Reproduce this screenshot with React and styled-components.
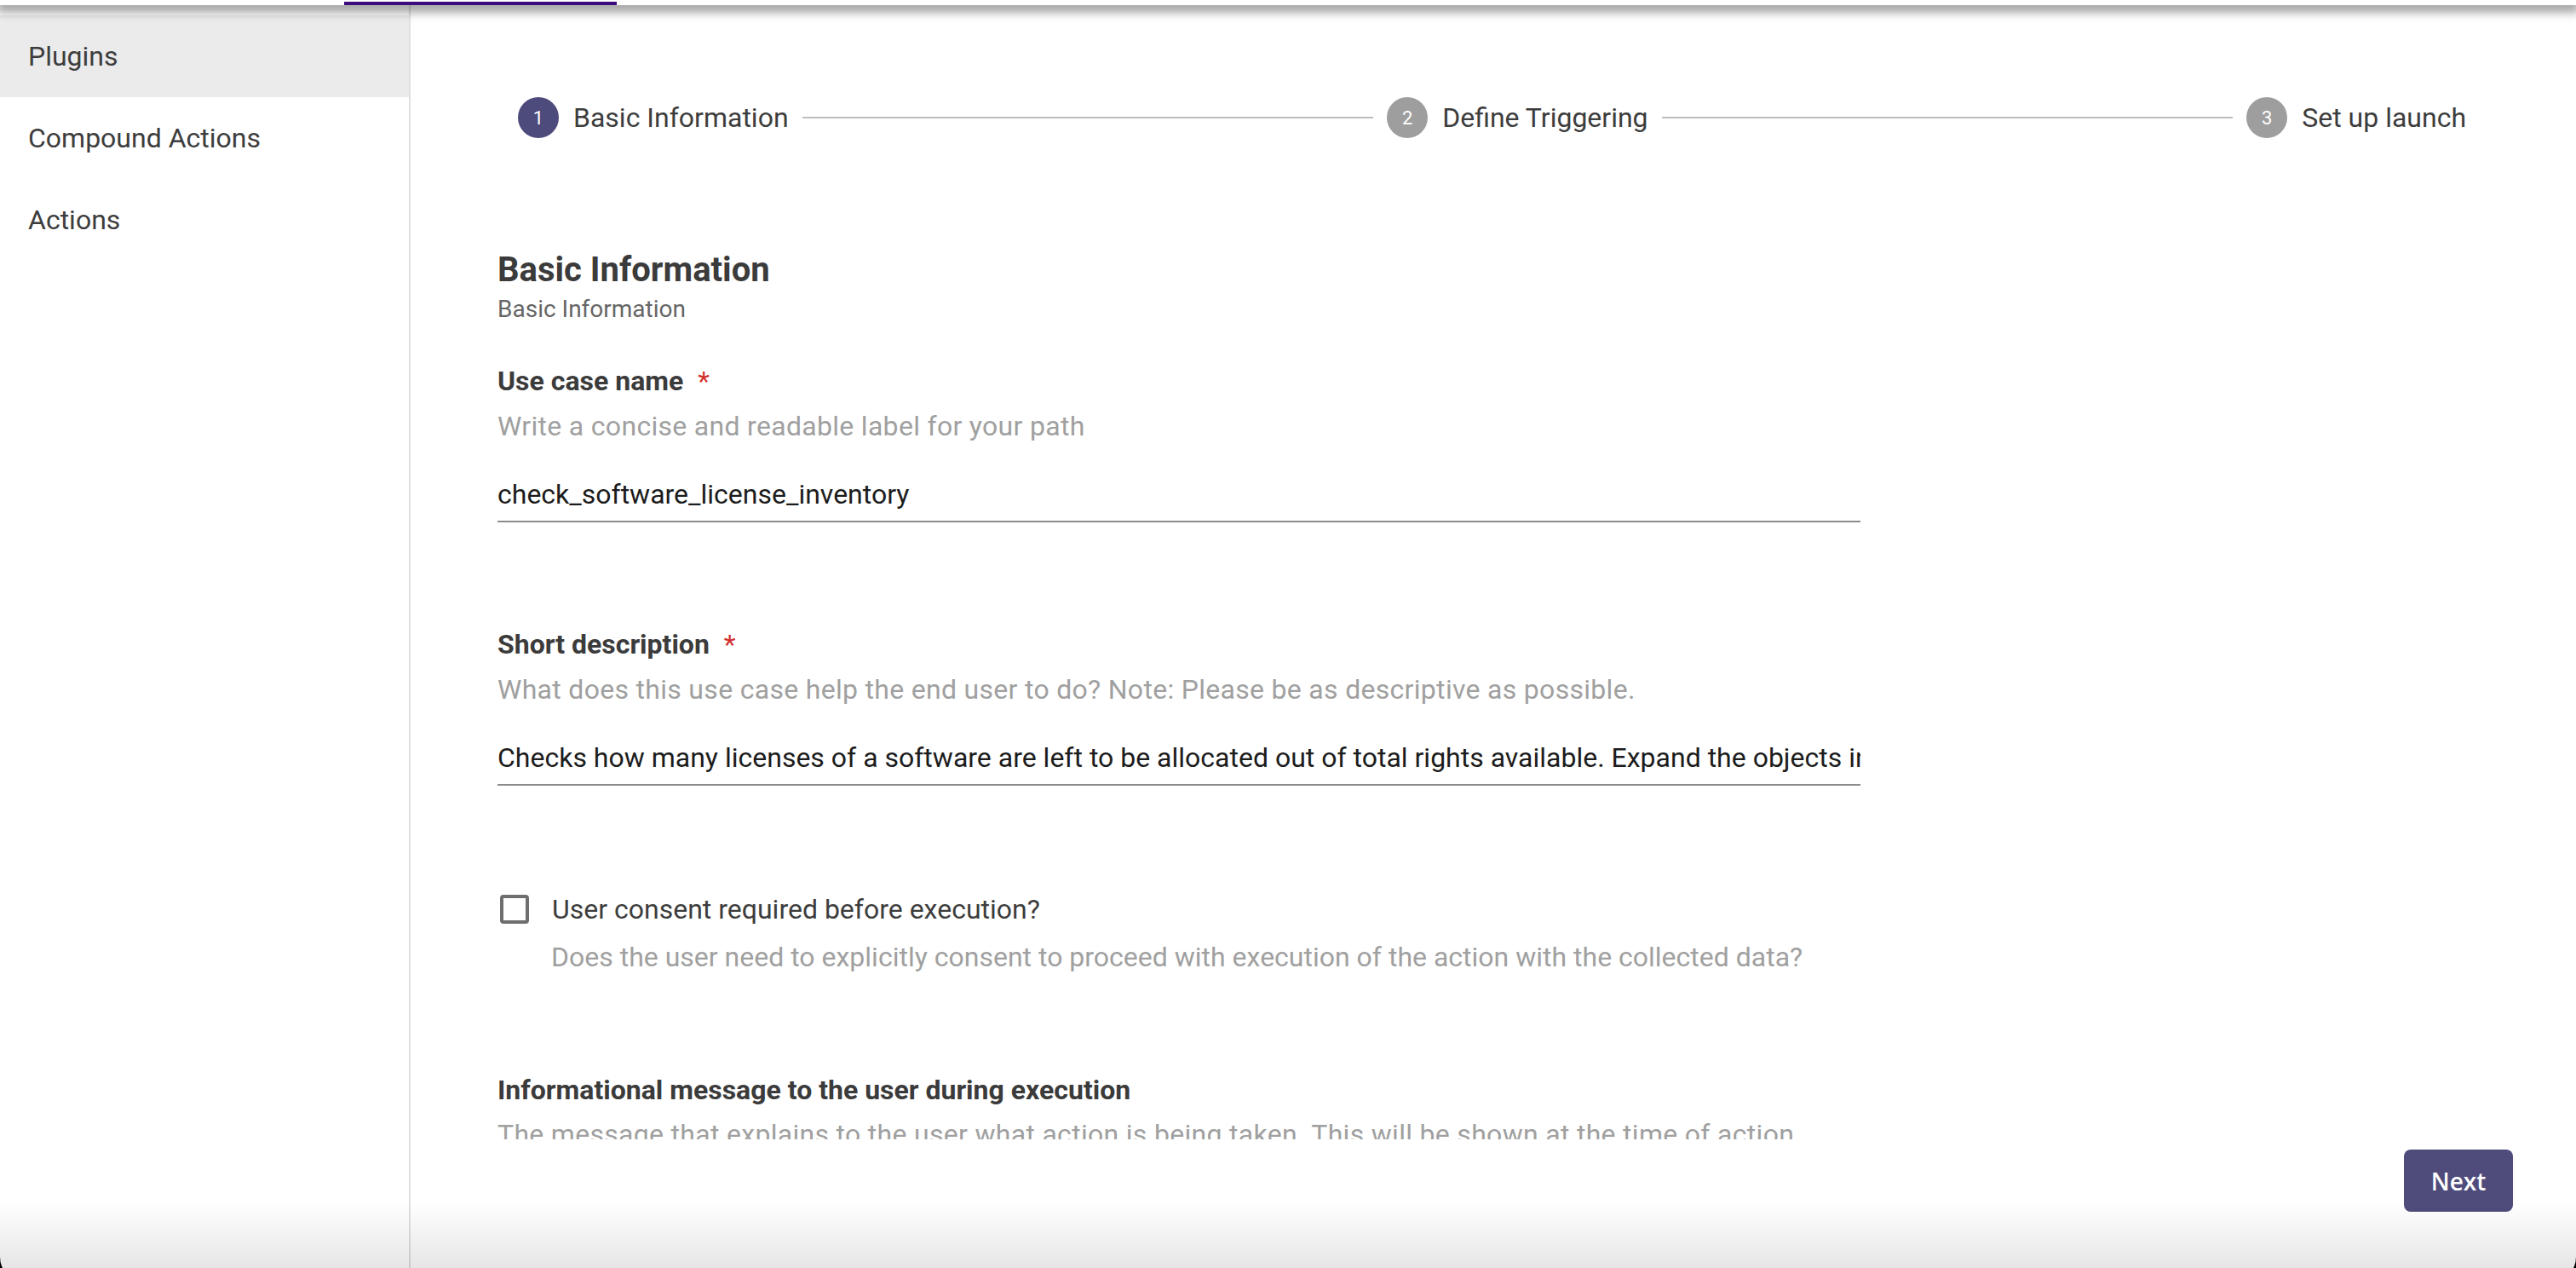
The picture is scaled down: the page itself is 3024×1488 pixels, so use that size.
import React from "react";
import styled, { createGlobalStyle } from "styled-components";

const GlobalStyle = createGlobalStyle`
  html, body {
    margin: 0;
    padding: 0;
    overflow: hidden;
    background: #000;
  }
  body {
    font-family: Roboto, "Liberation Sans", sans-serif;
  }
  * {
    box-sizing: border-box;
  }
`;

const Frame = styled.div`
  position: relative;
  width: 3024px;
  height: 1505px;
  background: #fff;
  border-radius: 0 0 30px 30px;
  overflow: hidden;
  display: flex;
  flex-direction: column;

  &::after {
    content: "";
    position: absolute;
    left: 0;
    right: 0;
    bottom: 0;
    height: 95px;
    background: linear-gradient(to bottom, rgba(0, 0, 0, 0), rgba(0, 0, 0, 0.12));
    pointer-events: none;
  }
`;

const TopBar = styled.header`
  position: relative;
  z-index: 2;
  height: 6px;
  flex-shrink: 0;
  background: #fff;
  box-shadow: 0 4px 12px 4px rgba(0, 0, 0, 0.4);
  display: flex;
  align-items: flex-end;
  padding-left: 404px;
`;

const TabIndicator = styled.div`
  width: 320px;
  height: 4px;
  background: #3a0c7c;
`;

const Body = styled.div`
  flex: 1;
  display: flex;
  min-height: 0;
`;

const Sidebar = styled.nav`
  width: 482px;
  flex-shrink: 0;
  border-right: 2px solid #e0e0e0;
  padding-top: 12px;
`;

const NavItem = styled.div`
  height: 96px;
  display: flex;
  align-items: center;
  padding-left: 33px;
  font-size: 32px;
  color: #3d3d3d;
  background: ${(p) => (p.$active ? "#ebebeb" : "transparent")};
`;

const Main = styled.main`
  flex: 1;
  min-width: 0;
  display: flex;
  flex-direction: column;
`;

const ScrollArea = styled.div`
  flex: 1;
  min-height: 0;
  overflow: hidden;
`;

const Stepper = styled.div`
  display: flex;
  align-items: center;
  padding: 108px 129px 0 126px;
`;

const Step = styled.div`
  display: flex;
  align-items: center;
  gap: 17px;
  flex-shrink: 0;
`;

const StepIcon = styled.div`
  width: 48px;
  height: 48px;
  border-radius: 50%;
  background: ${(p) => (p.$active ? "#4d4a7c" : "#9e9e9e")};
  color: #fff;
  font-size: 22px;
  display: flex;
  align-items: center;
  justify-content: center;
`;

const StepLabel = styled.span`
  font-size: 32px;
  line-height: 48px;
  color: #3d3d3d;
`;

const Connector = styled.div`
  flex: 1;
  height: 2px;
  background: #bdbdbd;
  margin: 0 16px;
`;

const Form = styled.section`
  width: 1600px;
  margin: 132px 0 0 102px;
`;

const Heading = styled.h2`
  margin: 0;
  font-size: 40px;
  line-height: 46px;
  font-weight: 700;
  color: #3b3b3b;
`;

const SubHeading = styled.div`
  margin-top: 6px;
  font-size: 28px;
  line-height: 34px;
  color: #666;
`;

const Field = styled.div`
  margin-top: ${(p) => p.$gap}px;
`;

const Label = styled.div`
  font-size: 32px;
  line-height: 36px;
  font-weight: 700;
  color: #3b3b3b;
`;

const Required = styled.span`
  color: #d32f2f;
  margin-left: 17px;
  font-weight: 400;
`;

const Helper = styled.div`
  margin-top: ${(p) => p.$gap || 17}px;
  font-size: 32px;
  line-height: 36px;
  letter-spacing: 0.3px;
  color: #a0a0a0;
  white-space: nowrap;
`;

const CheckHelper = styled(Helper)`
  padding-left: 63px;
  letter-spacing: 0;
`;

const TextInput = styled.input`
  display: block;
  width: 100%;
  height: 51px;
  margin-top: 44px;
  padding: 0 0 13px 0;
  border: none;
  border-bottom: 2px solid #8c8c8c;
  background: transparent;
  outline: none;
  font-family: Roboto, "Liberation Sans", sans-serif;
  font-size: 32px;
  line-height: 36px;
  color: #1c1c1c;
`;

const CheckRow = styled.label`
  display: flex;
  align-items: center;
  gap: 27px;
  height: 36px;
`;

const CheckBox = styled.span`
  width: 34px;
  height: 34px;
  margin-left: 3px;
  flex-shrink: 0;
  border: 4px solid #6e6e6e;
  border-radius: 4px;
`;

const CheckText = styled.span`
  font-size: 32px;
  line-height: 36px;
  color: #3d3d3d;
`;

const Footer = styled.div`
  height: 168px;
  flex-shrink: 0;
  display: flex;
  justify-content: flex-end;
  align-items: flex-start;
  padding: 12px 74px 0 0;
`;

const NextButton = styled.button`
  width: 128px;
  height: 73px;
  border: none;
  border-radius: 8px;
  background: #4f4c7c;
  color: #fff;
  font-family: "Open Sans", Roboto, sans-serif;
  font-size: 28px;
  font-weight: 600;
  cursor: pointer;
`;

const steps = ["Basic Information", "Define Triggering", "Set up launch"];

export default function App() {
  return (
    <>
      <GlobalStyle />
      <Frame>
        <TopBar>
          <TabIndicator />
        </TopBar>
        <Body>
          <Sidebar>
            <NavItem $active>Plugins</NavItem>
            <NavItem>Compound Actions</NavItem>
            <NavItem>Actions</NavItem>
          </Sidebar>
          <Main>
            <ScrollArea>
              <Stepper>
                {steps.map((s, i) => (
                  <React.Fragment key={s}>
                    {i > 0 && <Connector />}
                    <Step>
                      <StepIcon $active={i === 0}>{i + 1}</StepIcon>
                      <StepLabel>{s}</StepLabel>
                    </Step>
                  </React.Fragment>
                ))}
              </Stepper>
              <Form>
                <Heading>Basic Information</Heading>
                <SubHeading>Basic Information</SubHeading>

                <Field $gap={49}>
                  <Label>
                    Use case name<Required>*</Required>
                  </Label>
                  <Helper>Write a concise and readable label for your path</Helper>
                  <TextInput readOnly defaultValue="check_software_license_inventory" />
                </Field>

                <Field $gap={125}>
                  <Label>
                    Short description<Required>*</Required>
                  </Label>
                  <Helper>
                    What does this use case help the end user to do? Note: Please be as descriptive as possible.
                  </Helper>
                  <TextInput
                    readOnly
                    defaultValue="Checks how many licenses of a software are left to be allocated out of total rights available. Expand the objects in the response to see more details."
                  />
                </Field>

                <Field $gap={127}>
                  <CheckRow>
                    <CheckBox />
                    <CheckText>User consent required before execution?</CheckText>
                  </CheckRow>
                  <CheckHelper $gap={20}>
                    Does the user need to explicitly consent to proceed with execution of the action with the collected data?
                  </CheckHelper>
                </Field>

                <Field $gap={120}>
                  <Label>Informational message to the user during execution</Label>
                  <Helper $gap={16}>
                    The message that explains to the user what action is being taken. This will be shown at the time of action
                  </Helper>
                </Field>
              </Form>
            </ScrollArea>
            <Footer>
              <NextButton>Next</NextButton>
            </Footer>
          </Main>
        </Body>
      </Frame>
    </>
  );
}
